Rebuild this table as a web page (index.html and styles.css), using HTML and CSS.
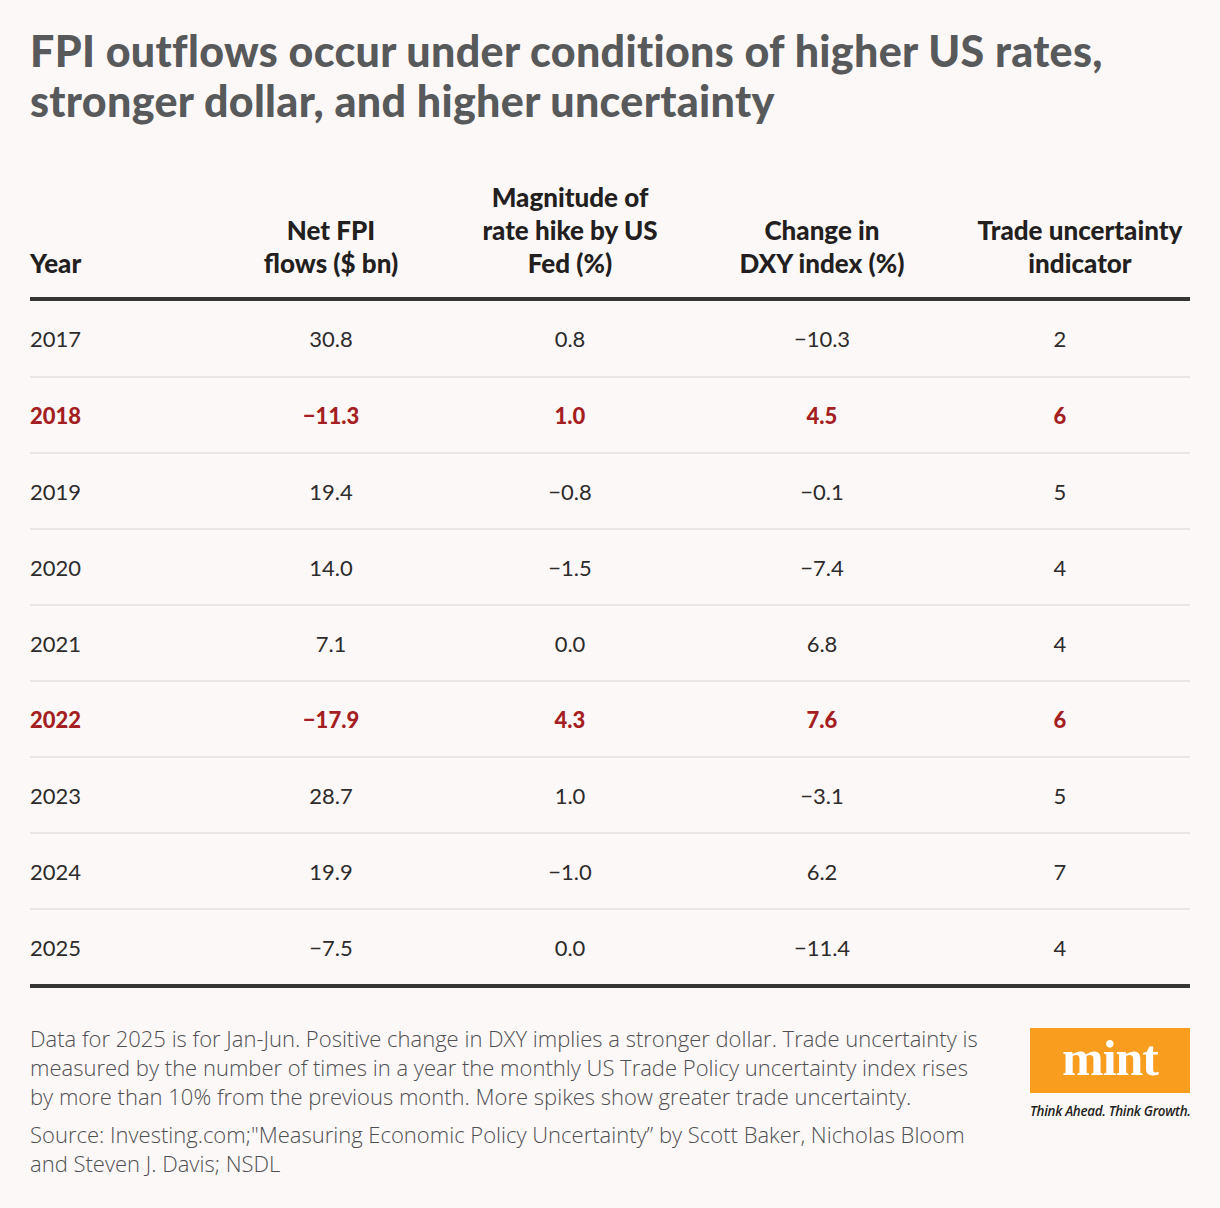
FILE: index.html
```html
<!DOCTYPE html>
<html lang="en">
<head>
<meta charset="utf-8">
<title>FPI outflows</title>
<link rel="stylesheet" href="styles.css">
</head>
<body>
<div class="page">
  <h1 class="title">FPI outflows occur under conditions of higher US rates,<br>stronger dollar, and higher uncertainty</h1>
  <table class="data">
    <colgroup>
      <col class="c1"><col class="c2"><col class="c3"><col class="c4"><col class="c5">
    </colgroup>
    <thead>
      <tr>
        <th class="left">Year</th>
        <th>Net FPI<br>flows ($ bn)</th>
        <th>Magnitude of<br>rate hike by US<br>Fed (%)</th>
        <th>Change in<br>DXY index (%)</th>
        <th class="last">Trade uncertainty<br>indicator</th>
      </tr>
    </thead>
    <tbody>
      <tr><td class="left">2017</td><td>30.8</td><td>0.8</td><td>−10.3</td><td class="last">2</td></tr>
      <tr class="hl"><td class="left">2018</td><td>−11.3</td><td>1.0</td><td>4.5</td><td class="last">6</td></tr>
      <tr><td class="left">2019</td><td>19.4</td><td>−0.8</td><td>−0.1</td><td class="last">5</td></tr>
      <tr><td class="left">2020</td><td>14.0</td><td>−1.5</td><td>−7.4</td><td class="last">4</td></tr>
      <tr><td class="left">2021</td><td>7.1</td><td>0.0</td><td>6.8</td><td class="last">4</td></tr>
      <tr class="hl"><td class="left">2022</td><td>−17.9</td><td>4.3</td><td>7.6</td><td class="last">6</td></tr>
      <tr><td class="left">2023</td><td>28.7</td><td>1.0</td><td>−3.1</td><td class="last">5</td></tr>
      <tr><td class="left">2024</td><td>19.9</td><td>−1.0</td><td>6.2</td><td class="last">7</td></tr>
      <tr><td class="left">2025</td><td>−7.5</td><td>0.0</td><td>−11.4</td><td class="last">4</td></tr>
    </tbody>
  </table>
  <div class="footer">
    <div class="notes">
      <p class="note">Data for 2025 is for Jan-Jun. Positive change in DXY implies a stronger dollar. Trade uncertainty is measured by the number of times in a year the monthly US Trade Policy uncertainty index rises by more than 10% from the previous month. More spikes show greater trade uncertainty.</p>
      <p class="source">Source: Investing.com;"Measuring Economic Policy Uncertainty” by Scott Baker, Nicholas Bloom and Steven J. Davis; NSDL</p>
    </div>
    <div class="brand">
      <div class="logo"><span class="logo-text">mint</span></div>
      <div class="tagline">Think Ahead. Think Growth.</div>
    </div>
  </div>
</div>
</body>
</html>
```
FILE: styles.css
```css
html, body {
  margin: 0;
  padding: 0;
  background: #fdf8f8;
}
.page {
  width: 1160px;
  padding: 26px 30px 0 30px;
  font-family: "Lato", "Open Sans", sans-serif;
}
.title {
  margin: 0;
  font-family: "Lato", sans-serif;
  font-weight: 900;
  font-size: 43px;
  line-height: 50px;
  color: #58595b;
  letter-spacing: 0.3px;
}
.data {
  width: 1160px;
  margin-top: 55px;
  border-collapse: collapse;
  table-layout: fixed;
}
.c1 { width: 180px; }
.c2 { width: 242px; }
.c3 { width: 236px; }
.c4 { width: 268px; }
.c5 { width: 234px; }
.data th {
  font-weight: 900;
  font-size: 26px;
  line-height: 33px;
  color: #231f20;
  text-align: center;
  vertical-align: bottom;
  padding: 0 0 17px 0;
  border-bottom: 4px solid #353535;
  white-space: nowrap;
}
.data th.left, .data td.left { text-align: left; }
.data th.last { padding-left: 14px; }
.data td {
  font-size: 22px;
  font-weight: 400;
  color: #2d2b2b;
  text-align: center;
  height: 74px;
  padding: 0;
  border-bottom: 2px solid #ebe6e6;
}
.data td.last { padding-right: 26px; }
.data tbody tr:first-child td { height: 75px; }
.data tbody tr:last-child td { border-bottom: 4px solid #353535; }
.data tr.hl td {
  color: #a51e22;
  font-weight: 900;
}
.footer {
  display: flex;
  justify-content: space-between;
  align-items: flex-start;
  margin-top: 36px;
}
.notes {
  width: 966px;
  font-family: "Open Sans", sans-serif;
  font-weight: 300;
  font-size: 22px;
  line-height: 29px;
  color: #4f4f51;
}
.notes p { margin: 0; }
.notes .source { margin-top: 9px; }
.brand {
  width: 160px;
  margin-top: 4px;
}
.logo {
  height: 65px;
  background: #f89d1e;
  display: flex;
  align-items: center;
  justify-content: center;
}
.logo-text {
  font-family: "Liberation Serif", "DejaVu Serif", serif;
  font-weight: 700;
  font-size: 50px;
  line-height: 1;
  color: #ffffff;
  letter-spacing: -1px;
  margin-top: -6px;
}
.tagline {
  margin-top: 9px;
  font-family: "Open Sans", sans-serif;
  font-style: italic;
  font-weight: 600;
  font-size: 13.4px;
  letter-spacing: -0.3px;
  color: #231f20;
  white-space: nowrap;
}
```
